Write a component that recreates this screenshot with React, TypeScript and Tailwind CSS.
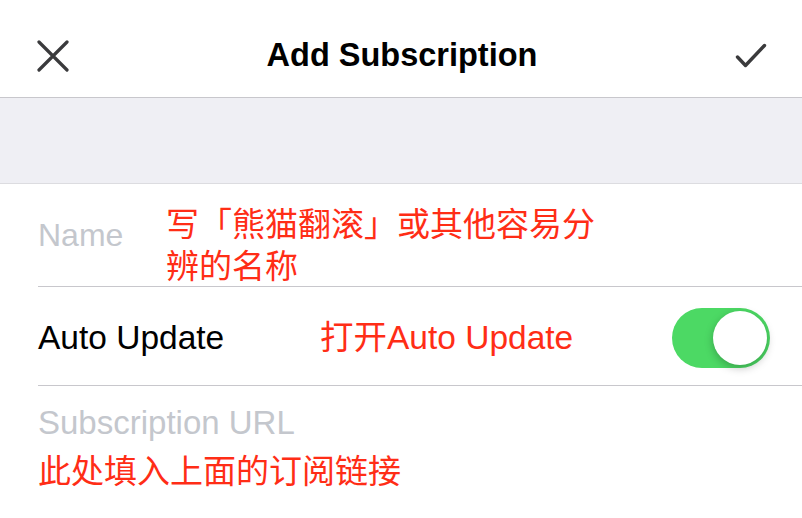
import React from 'react';

const font = "font-['Liberation_Sans','Noto_Sans_CJK_SC',sans-serif]";

const CloseIcon: React.FC = () => (
  <svg width="32" height="32" viewBox="0 0 32 32" fill="none">
    <path d="M2 2 L30 30 M30 2 L2 30" stroke="#3a3a3c" strokeWidth="3.2" strokeLinecap="round" />
  </svg>
);

const CheckIcon: React.FC = () => (
  <svg width="32" height="26" viewBox="0 0 32 26" fill="none">
    <path d="M2.5 14 L10.5 22.5 L29.5 2.5" stroke="#3a3a3c" strokeWidth="3.4" strokeLinecap="round" strokeLinejoin="round" />
  </svg>
);

const Toggle: React.FC = () => (
  <div className="flex h-[60px] w-[98px] items-center justify-end rounded-full bg-[#4cd964] px-[3px]">
    <div className="h-[54px] w-[54px] rounded-full bg-white shadow-[0_3px_8px_rgba(0,0,0,0.25)]" />
  </div>
);

const App: React.FC = () => {
  return (
    <div className={`h-[518px] w-[802px] overflow-hidden bg-white ${font}`}>
      <header className="flex h-[98px] items-center justify-between border-b border-[#c8c7cc] pl-[37px] pr-[35px] pt-[14px]">
        <CloseIcon />
        <h1 className="text-[32.5px] font-bold text-black">Add Subscription</h1>
        <CheckIcon />
      </header>
      <div className="h-[86px] border-b border-[#dcdce0] bg-[#efeff4]" />
      <div className="pl-[38px]">
        <div className="flex h-[103px] items-center border-b border-[#c8c7cc]">
          <span className="w-[128px] text-[32px] text-[#c4c7cd]">Name</span>
          <p className="w-[440px] pt-[22px] text-[33px] leading-[42px] text-[#ff2d16]">写「熊猫翻滚」或其他容易分辨的名称</p>
        </div>
        <div className="flex h-[99px] items-center border-b border-[#c8c7cc] pr-[32px] pt-[4px]">
          <span className="w-[282px] text-[33.5px] text-black">Auto Update</span>
          <span className="flex-1 text-[33.5px] text-[#ff2d16]">打开Auto Update</span>
          <Toggle />
        </div>
        <div className="flex flex-col pt-[19px]">
          <span className="text-[33px] leading-[36px] text-[#c4c7cd]">Subscription URL</span>
          <span className="mt-[10px] text-[33px] leading-[42px] text-[#ff2d16]">此处填入上面的订阅链接</span>
        </div>
      </div>
    </div>
  );
};

export default App;
